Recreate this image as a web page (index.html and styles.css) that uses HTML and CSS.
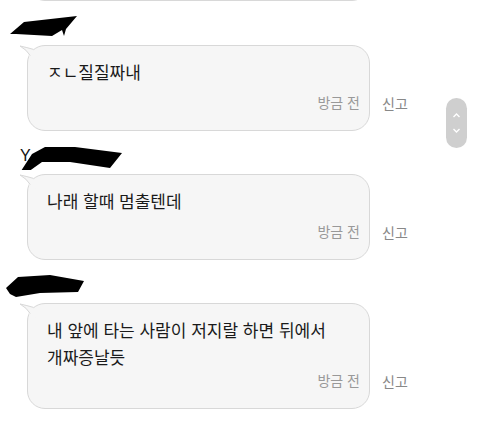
FILE: index.html
```html
<!DOCTYPE html>
<html lang="ko">
<head>
  <meta charset="UTF-8">
  <title>댓글</title>
  <link rel="stylesheet" href="styles.css">
</head>
<body>
  <div class="feed">
    <div class="bubble prev"></div>

    <div class="msg first">
      <div class="name">
        <svg width="130" height="26" viewBox="0 0 130 26"><polygon points="10,19 24,7 77,1 66,14 64,21 62,15 52,21 16,19" fill="#000"/></svg>
      </div>
      <div class="row">
        <div class="bubble">
          <svg class="tail" width="20" height="16" viewBox="0 0 20 16">
            <path d="M1 1 Q8 2.5 14.5 4.4 L17 15 L11.5 13 Q8 5 1 1 Z" fill="#f6f6f6"/>
            <path d="M1 1 Q8 2.5 14.5 4.4 M1 1 Q8 5 11.2 10.5" fill="none" stroke="#d8d8d8" stroke-width="1"/>
          </svg>
          <p class="text">ㅈㄴ질질짜내</p>
          <div class="time">방금 전</div>
        </div>
        <span class="report">신고</span>
      </div>
    </div>

    <div class="msg">
      <div class="name">
        <span class="initial">Y</span>
        <svg width="130" height="26" viewBox="0 0 130 26"><polygon points="21,27 32,10 45,3 75,3 122,9 110,24 70,18 42,18 28,28" fill="#000"/></svg>
      </div>
      <div class="row">
        <div class="bubble">
          <svg class="tail" width="20" height="16" viewBox="0 0 20 16">
            <path d="M1 1 Q8 2.5 14.5 4.4 L17 15 L11.5 13 Q8 5 1 1 Z" fill="#f6f6f6"/>
            <path d="M1 1 Q8 2.5 14.5 4.4 M1 1 Q8 5 11.2 10.5" fill="none" stroke="#d8d8d8" stroke-width="1"/>
          </svg>
          <p class="text">나래 할때 멈출텐데</p>
          <div class="time">방금 전</div>
        </div>
        <span class="report">신고</span>
      </div>
    </div>

    <div class="msg">
      <div class="name">
        <svg width="130" height="26" viewBox="0 0 130 26"><polygon points="6,15 18,4 50,2 84,8 78,19 40,20 16,24 10,21" fill="#000"/></svg>
      </div>
      <div class="row">
        <div class="bubble">
          <svg class="tail" width="20" height="16" viewBox="0 0 20 16">
            <path d="M1 1 Q8 2.5 14.5 4.4 L17 15 L11.5 13 Q8 5 1 1 Z" fill="#f6f6f6"/>
            <path d="M1 1 Q8 2.5 14.5 4.4 M1 1 Q8 5 11.2 10.5" fill="none" stroke="#d8d8d8" stroke-width="1"/>
          </svg>
          <p class="text">내 앞에 타는 사람이 저지랄 하면 뒤에서<br>개짜증날듯</p>
          <div class="time">방금 전</div>
        </div>
        <span class="report">신고</span>
      </div>
    </div>
  </div>

  <div class="scroller">
    <svg width="21" height="50" viewBox="0 0 21 50">
      <path d="M7.5 19 L10.5 16 L13.5 19" fill="none" stroke="#fff" stroke-width="1.4"/>
      <path d="M7.5 31 L10.5 34 L13.5 31" fill="none" stroke="#fff" stroke-width="1.4"/>
    </svg>
  </div>
</body>
</html>
```

FILE: styles.css
```css
body { margin: 0; background: #fff; font-family: "Noto Sans CJK KR", "Noto Sans", sans-serif; color: #1a1a1a; overflow: hidden; }
.feed { padding: 0 0 0 27px; }
.prev { width: 343px; height: 60px; margin-top: -59px; }
.msg { margin-top: 13px; }
.msg.first { margin-top: 14px; }
.name { height: 30px; margin-left: -27px; position: relative; }
.name svg { display: block; }
.initial { position: absolute; left: 20px; top: 3px; font-family: "Liberation Sans", sans-serif; font-size: 16px; color: #111; }
.row { display: flex; align-items: flex-end; }
.bubble { position: relative; box-sizing: border-box; width: 343px; background: #f6f6f6; border: 1px solid #d8d8d8; border-radius: 18px; padding: 12px 9px 18px 19px; }
.tail { position: absolute; left: -9px; top: -1px; overflow: visible; }
.text { margin: 0; min-height: 34px; font-size: 17px; line-height: 27px; }
.time { text-align: right; font-size: 14px; line-height: 20px; color: #999; }
.report { font-size: 14px; line-height: 20px; color: #888; margin: 0 0 18px 12px; }
.scroller { position: absolute; left: 446px; top: 98px; width: 21px; height: 50px; border-radius: 11px; background: #cfcfcf; }
.scroller svg { display: block; }
```
